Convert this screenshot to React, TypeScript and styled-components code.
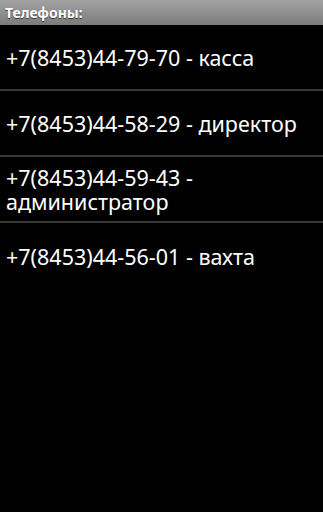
import styled, { createGlobalStyle } from "styled-components";

const GlobalStyle = createGlobalStyle`
  html, body {
    margin: 0;
    padding: 0;
    background: #000;
  }
  body {
    width: 323px;
    height: 512px;
    overflow: hidden;
    font-family: "Noto Sans", "Open Sans", sans-serif;
  }
`;

const phones = [
  "+7(8453)44-79-70 - касса",
  "+7(8453)44-58-29 - директор",
  "+7(8453)44-59-43 - администратор",
  "+7(8453)44-56-01 - вахта",
];

const App = () => {
  return (
    <>
      <GlobalStyle />
      <Screen>
        <TitleBar>Телефоны:</TitleBar>
        <List>
          {phones.map((p) => (
            <Row key={p}>{p}</Row>
          ))}
        </List>
      </Screen>
    </>
  );
};

export default App;

const Screen = styled.div`
  width: 323px;
  height: 512px;
  background: #000;
  display: flex;
  flex-direction: column;
`;

const TitleBar = styled.div`
  height: 25px;
  box-sizing: border-box;
  padding: 0 5px;
  display: flex;
  align-items: center;
  background: linear-gradient(#a3a3a3, #7b7b7b);
  color: #fff;
  font-size: 14px;
  font-weight: 700;
  text-shadow: 0 1px 1px rgba(0, 0, 0, 0.6);
`;

const List = styled.div`
  display: flex;
  flex-direction: column;
`;

const Row = styled.div`
  min-height: 66px;
  box-sizing: border-box;
  padding: 9px 6px 7px;
  display: flex;
  align-items: center;
  color: #fff;
  font-size: 21.5px;
  line-height: 24px;
  border-bottom: 2px solid #383838;

  &:last-child {
    border-bottom: none;
  }
`;
